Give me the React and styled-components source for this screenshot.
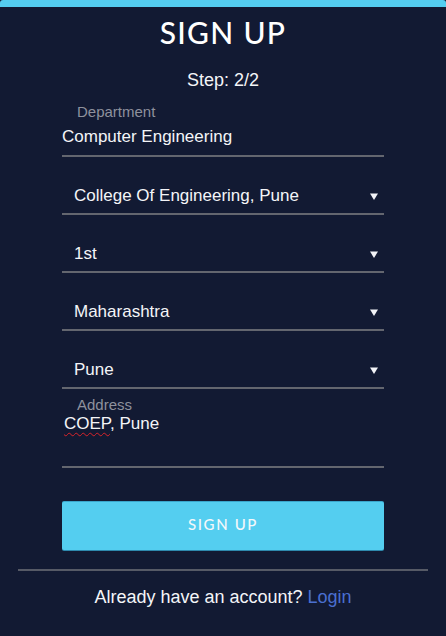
import styled, { createGlobalStyle } from "styled-components";

const GlobalStyle = createGlobalStyle`
  html, body {
    margin: 0;
    padding: 0;
    background: #121a33;
  }
  * { box-sizing: border-box; }
`;

const selects = [
  "College Of Engineering, Pune",
  "1st",
  "Maharashtra",
  "Pune",
];

const Arrow = () => (
  <svg width="8" height="7" viewBox="0 0 8 7">
    <polygon points="0,0.5 8,0.5 4,7" fill="#f2f3f7" />
  </svg>
);

const App = () => {
  return (
    <>
      <GlobalStyle />
      <Card>
        <Title>SIGN UP</Title>
        <Step>Step: 2/2</Step>
        <Form>
          <Field>
            <Label>Department</Label>
            <Value>Computer Engineering</Value>
          </Field>
          {selects.map((s) => (
            <SelectBox key={s}>
              <span>{s}</span>
              <ArrowWrap><Arrow /></ArrowWrap>
            </SelectBox>
          ))}
          <Field $gap={7}>
            <Label>Address</Label>
            <AddressValue>
              <Typo>COEP</Typo>, Pune
            </AddressValue>
          </Field>
          <Button>SIGN UP</Button>
        </Form>
        <Divider />
        <Footer>
          Already have an account? <LoginLink>Login</LoginLink>
        </Footer>
      </Card>
    </>
  );
};

const Card = styled.div`
  min-height: 100vh;
  background: #121a33;
  border-top: 7px solid #54cdf0;
  border-radius: 3px 3px 0 0;
  padding-top: 7px;
  display: flex;
  flex-direction: column;
  align-items: center;
  font-family: "Liberation Sans", Arial, sans-serif;
  color: #f4f5f8;
`;

const Title = styled.h1`
  margin: 0;
  font-family: Lato, "Liberation Sans", sans-serif;
  font-weight: 500;
  font-size: 30px;
  line-height: 36px;
  letter-spacing: 1.3px;
  color: #ffffff;
`;

const Step = styled.div`
  margin-top: 20px;
  font-size: 18px;
  line-height: 20px;
`;

const Form = styled.div`
  width: 322px;
  margin-top: 13px;
  display: flex;
  flex-direction: column;
`;

const Field = styled.div`
  display: flex;
  flex-direction: column;
  margin-top: ${({ $gap }) => ($gap ? `${$gap}px` : "0")};
`;

const Label = styled.div`
  padding-left: 15px;
  font-size: 15px;
  line-height: 18px;
  color: #8e919d;
`;

const Value = styled.div`
  margin-top: 6px;
  font-size: 17px;
  line-height: 20px;
  padding-bottom: 8px;
  border-bottom: 2px solid #63666f;
`;

const AddressValue = styled.div`
  height: 54px;
  padding-left: 2px;
  font-size: 17px;
  line-height: 20px;
  border-bottom: 2px solid #63666f;
`;

const Typo = styled.span`
  text-decoration: underline wavy #d8232a;
  text-decoration-thickness: 1px;
  text-underline-offset: 3px;
`;

const SelectBox = styled.div`
  position: relative;
  margin-top: 18px;
  height: 40px;
  padding: 3px 0 0 12px;
  display: flex;
  align-items: center;
  font-size: 17px;
  border-bottom: 2px solid #63666f;
`;

const ArrowWrap = styled.div`
  position: absolute;
  right: 6px;
  top: 18px;
  display: flex;
`;

const Button = styled.button`
  margin-top: 34px;
  height: 48px;
  padding: 0 0 5px;
  border: none;
  border-radius: 2px;
  background: #54cef0;
  box-shadow: 0 1px 0 #2e89ad, 0 -1px 0 #3aa6cc;
  color: #f3f8fb;
  font-family: Lato, "Liberation Sans", sans-serif;
  font-weight: 500;
  font-size: 15px;
  letter-spacing: 1.6px;
  cursor: pointer;
`;

const Divider = styled.div`
  align-self: stretch;
  margin: 19px 18px 0;
  height: 2px;
  background: #565a66;
`;

const Footer = styled.div`
  margin-top: 16px;
  font-size: 18px;
  line-height: 20px;
`;

const LoginLink = styled.a`
  color: #4a6fd0;
  cursor: pointer;
`;

export default App;
